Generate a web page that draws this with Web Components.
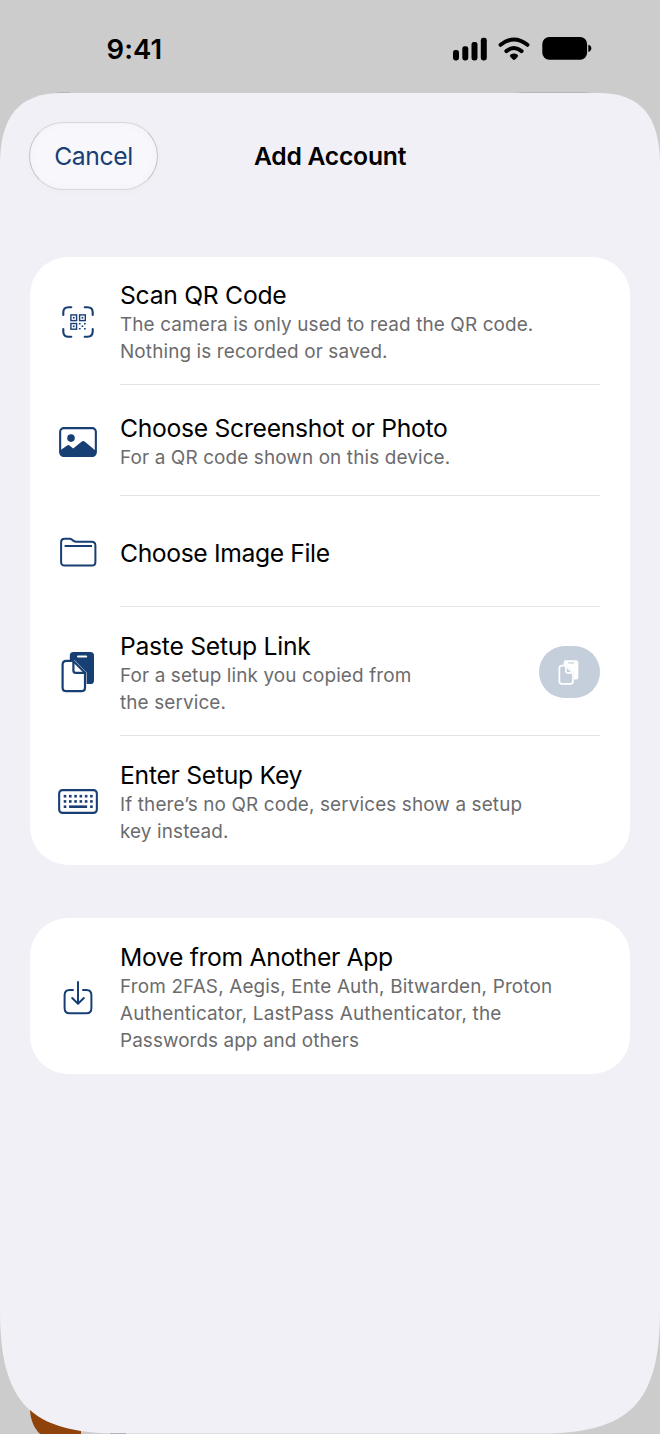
<!DOCTYPE html>
<html lang="en"><head><meta charset="utf-8"><title>Add Account</title>
<style>
html,body{margin:0;padding:0}
body{width:660px;height:1434px;overflow:hidden;background:#ccc;font-family:Inter,"Liberation Sans",sans-serif;color:#000}
</style></head><body>
<phone-screen>
  <status-bar slot="status">9:41</status-bar>
  <nav-header slot="header"><span slot="action">Cancel</span>Add Account</nav-header>
  <option-card>
    <option-row icon="qr" style="--h:127px;--p:21px;--i:48.5px;--ls:-.27px">Scan QR Code<text-line slot="sub">The camera is only used to read the QR code.</text-line><text-line slot="sub">Nothing is recorded or saved.</text-line></option-row>
    <option-row icon="photo" line style="--h:111px;--p:26px;--i:42.5px;--ls:-.29px">Choose Screenshot or Photo<text-line slot="sub">For a QR code shown on this device.</text-line></option-row>
    <option-row icon="folder" line style="--h:111px;--p:40px;--i:42px;--ls:-.38px">Choose Image File</option-row>
    <option-row icon="paste" line style="--h:129px;--p:22px;--i:44px;--ls:-.27px">Paste Setup Link<text-line slot="sub">For a setup link you copied from</text-line><text-line slot="sub">the service.</text-line><paste-button slot="end"></paste-button></option-row>
    <option-row icon="keyboard" line style="--h:130px;--p:22px;--i:54px;--ls:-.27px">Enter Setup Key<text-line slot="sub">If there’s no QR code, services show a setup</text-line><text-line slot="sub">key instead.</text-line></option-row>
  </option-card>
  <option-card>
    <option-row icon="import" style="--h:156px;--p:22px;--i:63px;--ls:-.33px">Move from Another App<text-line slot="sub" style="letter-spacing:.16px">From 2FAS, Aegis, Ente Auth, Bitwarden, Proton</text-line><text-line slot="sub" style="letter-spacing:.18px">Authenticator, LastPass Authenticator, the</text-line><text-line slot="sub" style="letter-spacing:.08px">Passwords app and others</text-line></option-row>
  </option-card>
</phone-screen>
<script>
const define=(name,html)=>customElements.define(name,class extends HTMLElement{
  connectedCallback(){
    if(this.shadowRoot)return;
    const t=document.createElement('template');
    t.innerHTML=typeof html==='function'?html(this):html;
    this.attachShadow({mode:'open'}).append(t.content.cloneNode(true));
  }
});
const paste=`<path d="M8.800 10V5.600Q8.800 2 12.400 2H29.400Q33 2 33 5.600V30.400Q33 34 29.400 34H25.600V22.500L13.500 10Z" fill="currentColor"/><path d="M17 6.400H25.200" stroke="var(--cut,#fff)" stroke-width="2" stroke-linecap="round"/><path d="M5.400 10.900H12.300L24 22.800V37.400Q24 41.200 20.200 41.200H5.400Q1.600 41.200 1.600 37.400V14.700Q1.600 10.900 5.400 10.900Z" fill="var(--cut,#fff)" stroke="currentColor" stroke-width="var(--sw,2.200)"/><path d="M12.400 11V20.500Q12.400 22.900 14.800 22.900H24" fill="none" stroke="currentColor" stroke-width="var(--sw,2.200)"/>`;
const eye=(x,y)=>`<rect x="${x}" y="${y}" width="5.700" height="5.700" fill="none" stroke="currentColor" stroke-width="1.400"/><rect x="${x+2}" y="${y+2}" width="1.700" height="1.700" fill="currentColor"/>`;
const keys=[0,1].map(r=>[0,1,2,3,4,5].map(c=>`<rect x="${5.7+c*5.28}" y="${5.9+r*5.25}" width="2.600" height="2.600"/>`).join('')).join('');
const icons={
 qr:[32,32,`<g fill="none" stroke="currentColor" stroke-width="2.100" stroke-linecap="round"><path d="M1.300 9V6.500Q1.300 1.300 6.500 1.300H9.300M22.700 1.300H25.500Q30.700 1.300 30.700 6.500V9M30.700 23V25.500Q30.700 30.700 25.500 30.700H22.700M9.300 30.700H6.500Q1.300 30.700 1.300 25.500V23"/></g>${eye(8.9,8.9)}${eye(17.6,8.9)}${eye(8.9,17.5)}<g fill="currentColor"><path d="M16.900 16.900h1.700v1.700h-1.700zM22 16.900h1.700v1.700H22zM19.500 19.400h1.700v1.700h-1.700zM16.900 21.900h1.700v1.700h-1.700zM22 21.900h1.700v1.700H22z"/></g>`],
 photo:[38,30,`<rect x="1.150" y="1.150" width="35.700" height="27.700" rx="3.600" fill="none" stroke="currentColor" stroke-width="2.100"/><circle cx="12" cy="11.100" r="3.800" fill="currentColor"/><path d="M1 23.600L8.100 18.400Q9.300 17.500 10.500 18.500L14.200 21.400L22.500 14.700Q24.200 13.300 25.900 14.700L37 24V26Q37 29.700 33.500 29.700H4.500Q1 29.700 1 26Z" fill="currentColor"/>`],
 folder:[38,30,`<path transform="translate(.4 0)" d="M1.700 5.200Q1.700 1.700 5.200 1.700H10Q11.500 1.700 12.700 2.700L14.200 3.900Q15.300 4.800 16.800 4.800H32.300Q36 4.800 36 8.500V24.900Q36 28.500 32.400 28.500H5.300Q1.700 28.500 1.700 24.900ZM5.200 8.900H32.600" fill="none" stroke="currentColor" stroke-width="2"/>`],
 paste:[35,43,paste],
 keyboard:[40,25,`<rect x="1.150" y="1.100" width="37.700" height="22.800" rx="3.400" fill="none" stroke="currentColor" stroke-width="2.100"/><g fill="currentColor">${keys}<rect x="5.700" y="16.400" width="2.600" height="2.600"/><rect x="11.100" y="16.400" width="18" height="2.600"/><rect x="32.100" y="16.400" width="2.600" height="2.600"/></g>`],
 import:[30,34,`<path d="M10 8.900H6.600Q1.600 8.900 1.600 14.200V27Q1.600 32.300 6.600 32.300H23.400Q28.400 32.300 28.400 27V14.200Q28.400 8.900 23.400 8.900H20M15 1V22.300M9.200 17L15 22.700L20.800 17" fill="none" stroke="currentColor" stroke-width="2" stroke-linecap="round" stroke-linejoin="round"/>`]
};
const svg=k=>{const[w,h,p]=icons[k];return `<svg width="${w}" height="${h}" viewBox="0 0 ${w} ${h}">${p}</svg>`};

define('phone-screen',`<style>
:host{display:grid;width:660px;height:1434px;position:relative;grid-template-rows:93px 1fr}
.bg{position:absolute;inset:0;z-index:-1}
.body{display:flex;flex-direction:column}
.cards{display:flex;flex-direction:column;gap:53px;padding:38px 30px 0}
</style>
<svg class="bg" width="660" height="1434"><rect width="660" height="1434" fill="#ccc"/>
<path d="M52 93.500L60 92.300H70V93.500ZM512 93.500L522 92.300H585L600 94Z" fill="#aeaeb2"/>
<path d="M30 1400V1411C31 1421 34 1428 40 1434H81V1400Z" fill="#8f420a"/>
<path d="M110 1434V1432.500H126V1434Z" fill="#77777b"/>
<path d="M0 165C0 115 20 93 62 93H598C640 93 660 115 660 165V1310C660 1403 630 1433.500 540 1433.500H120C30 1433.500 0 1403 0 1310Z" fill="#f1f0f6"/></svg>
<slot name="status"></slot><div class="body"><slot name="header"></slot><div class="cards"><slot></slot></div></div>`);

define('status-bar',`<style>
:host{display:flex;justify-content:space-between;height:97px;box-sizing:border-box;padding:0 68px 0 106.500px;align-items:center;font-size:27.500px;font-weight:600;letter-spacing:.1px}
svg{display:block}</style><span><slot></slot></span>
<svg width="140" height="26" viewBox="452 36 140 26"><rect x="453" y="50" width="6" height="10.500" rx="2.400"/><rect x="462.300" y="46.300" width="6" height="14.200" rx="2.400"/><rect x="471.500" y="42" width="6" height="18.500" rx="2.400"/><rect x="480.800" y="37.800" width="6" height="22.700" rx="2.400"/>
<g fill="none" stroke="#000" stroke-width="4" stroke-linecap="round"><path d="M500.600 44.800Q514 34.200 527.400 44.800M506.400 51.100Q514 45 521.600 51.100"/></g><path d="M510.600 54.600Q514 52.400 517.400 54.600Q518.800 55.700 517.600 57L515.400 59.300Q514 60.600 512.600 59.300L510.400 57Q509.200 55.700 510.600 54.600Z"/>
<rect x="542.300" y="37" width="44.800" height="22.700" rx="7"/><path d="M588.300 44.700Q591.300 45.500 591.300 48.300Q591.300 51.100 588.300 52Z"/></svg>`);

define('nav-header',`<style>
:host{display:grid;grid-template-columns:129px 1fr 129px;height:126px;box-sizing:border-box;padding:29px 29px;align-items:center;text-align:center}
.btn{height:68px;display:flex;align-items:center;justify-content:center;border-radius:34px;box-sizing:border-box;border:1px solid #c3c3c8;border-top-color:#d6d6dc;border-bottom-color:#d6d6dc;background:#f8f8fc;box-shadow:inset 0 0 8px #f1f0f6,0 2px 12px #00000004;color:#173f73;font-size:24.700px;letter-spacing:-.4px}
.t{font-size:24.700px;font-weight:600;letter-spacing:-.25px}
</style><div class="btn"><span><slot name="action"></slot></span></div><div class="t"><slot></slot></div>`);

define('option-card',`<style>:host{display:flex;flex-direction:column;background:#fff;border-radius:38px;width:600px;overflow:hidden}</style><slot></slot>`);
define('text-line',`<style>:host{display:block;white-space:nowrap;letter-spacing:.13px}</style><slot></slot>`);
define('paste-button',`<style>:host{display:flex;width:61.500px;height:52px;margin-top:17px;border-radius:26px;background:#c5cedb;color:#fff;--cut:#c5cedb;--sw:2.800;align-items:center;justify-content:center}svg{width:22px;height:26px}</style>${svg('paste')}`);
define('option-row',el=>`<style>
:host{display:grid;grid-template-columns:96px 1fr;height:var(--h)}
.i{display:flex;align-items:flex-start;justify-content:center;padding-top:var(--i);color:#173f73}
.c{display:flex;align-items:flex-start;justify-content:space-between;margin:0 30px 0 -6px;padding-top:var(--p);border-top:${el.hasAttribute('line')?'1px solid #e3e3e5':'0'};box-sizing:border-box}
.t{font-size:24.700px;line-height:34px;margin-bottom:-1px;white-space:nowrap;letter-spacing:var(--ls)}
.s{font-size:18.900px;line-height:27px;color:#6b6b6d}
</style><div class="i">${svg(el.getAttribute('icon'))}</div><div class="c"><div><div class="t"><slot></slot></div><div class="s"><slot name="sub"></slot></div></div><slot name="end"></slot></div>`);
</script></body></html>
